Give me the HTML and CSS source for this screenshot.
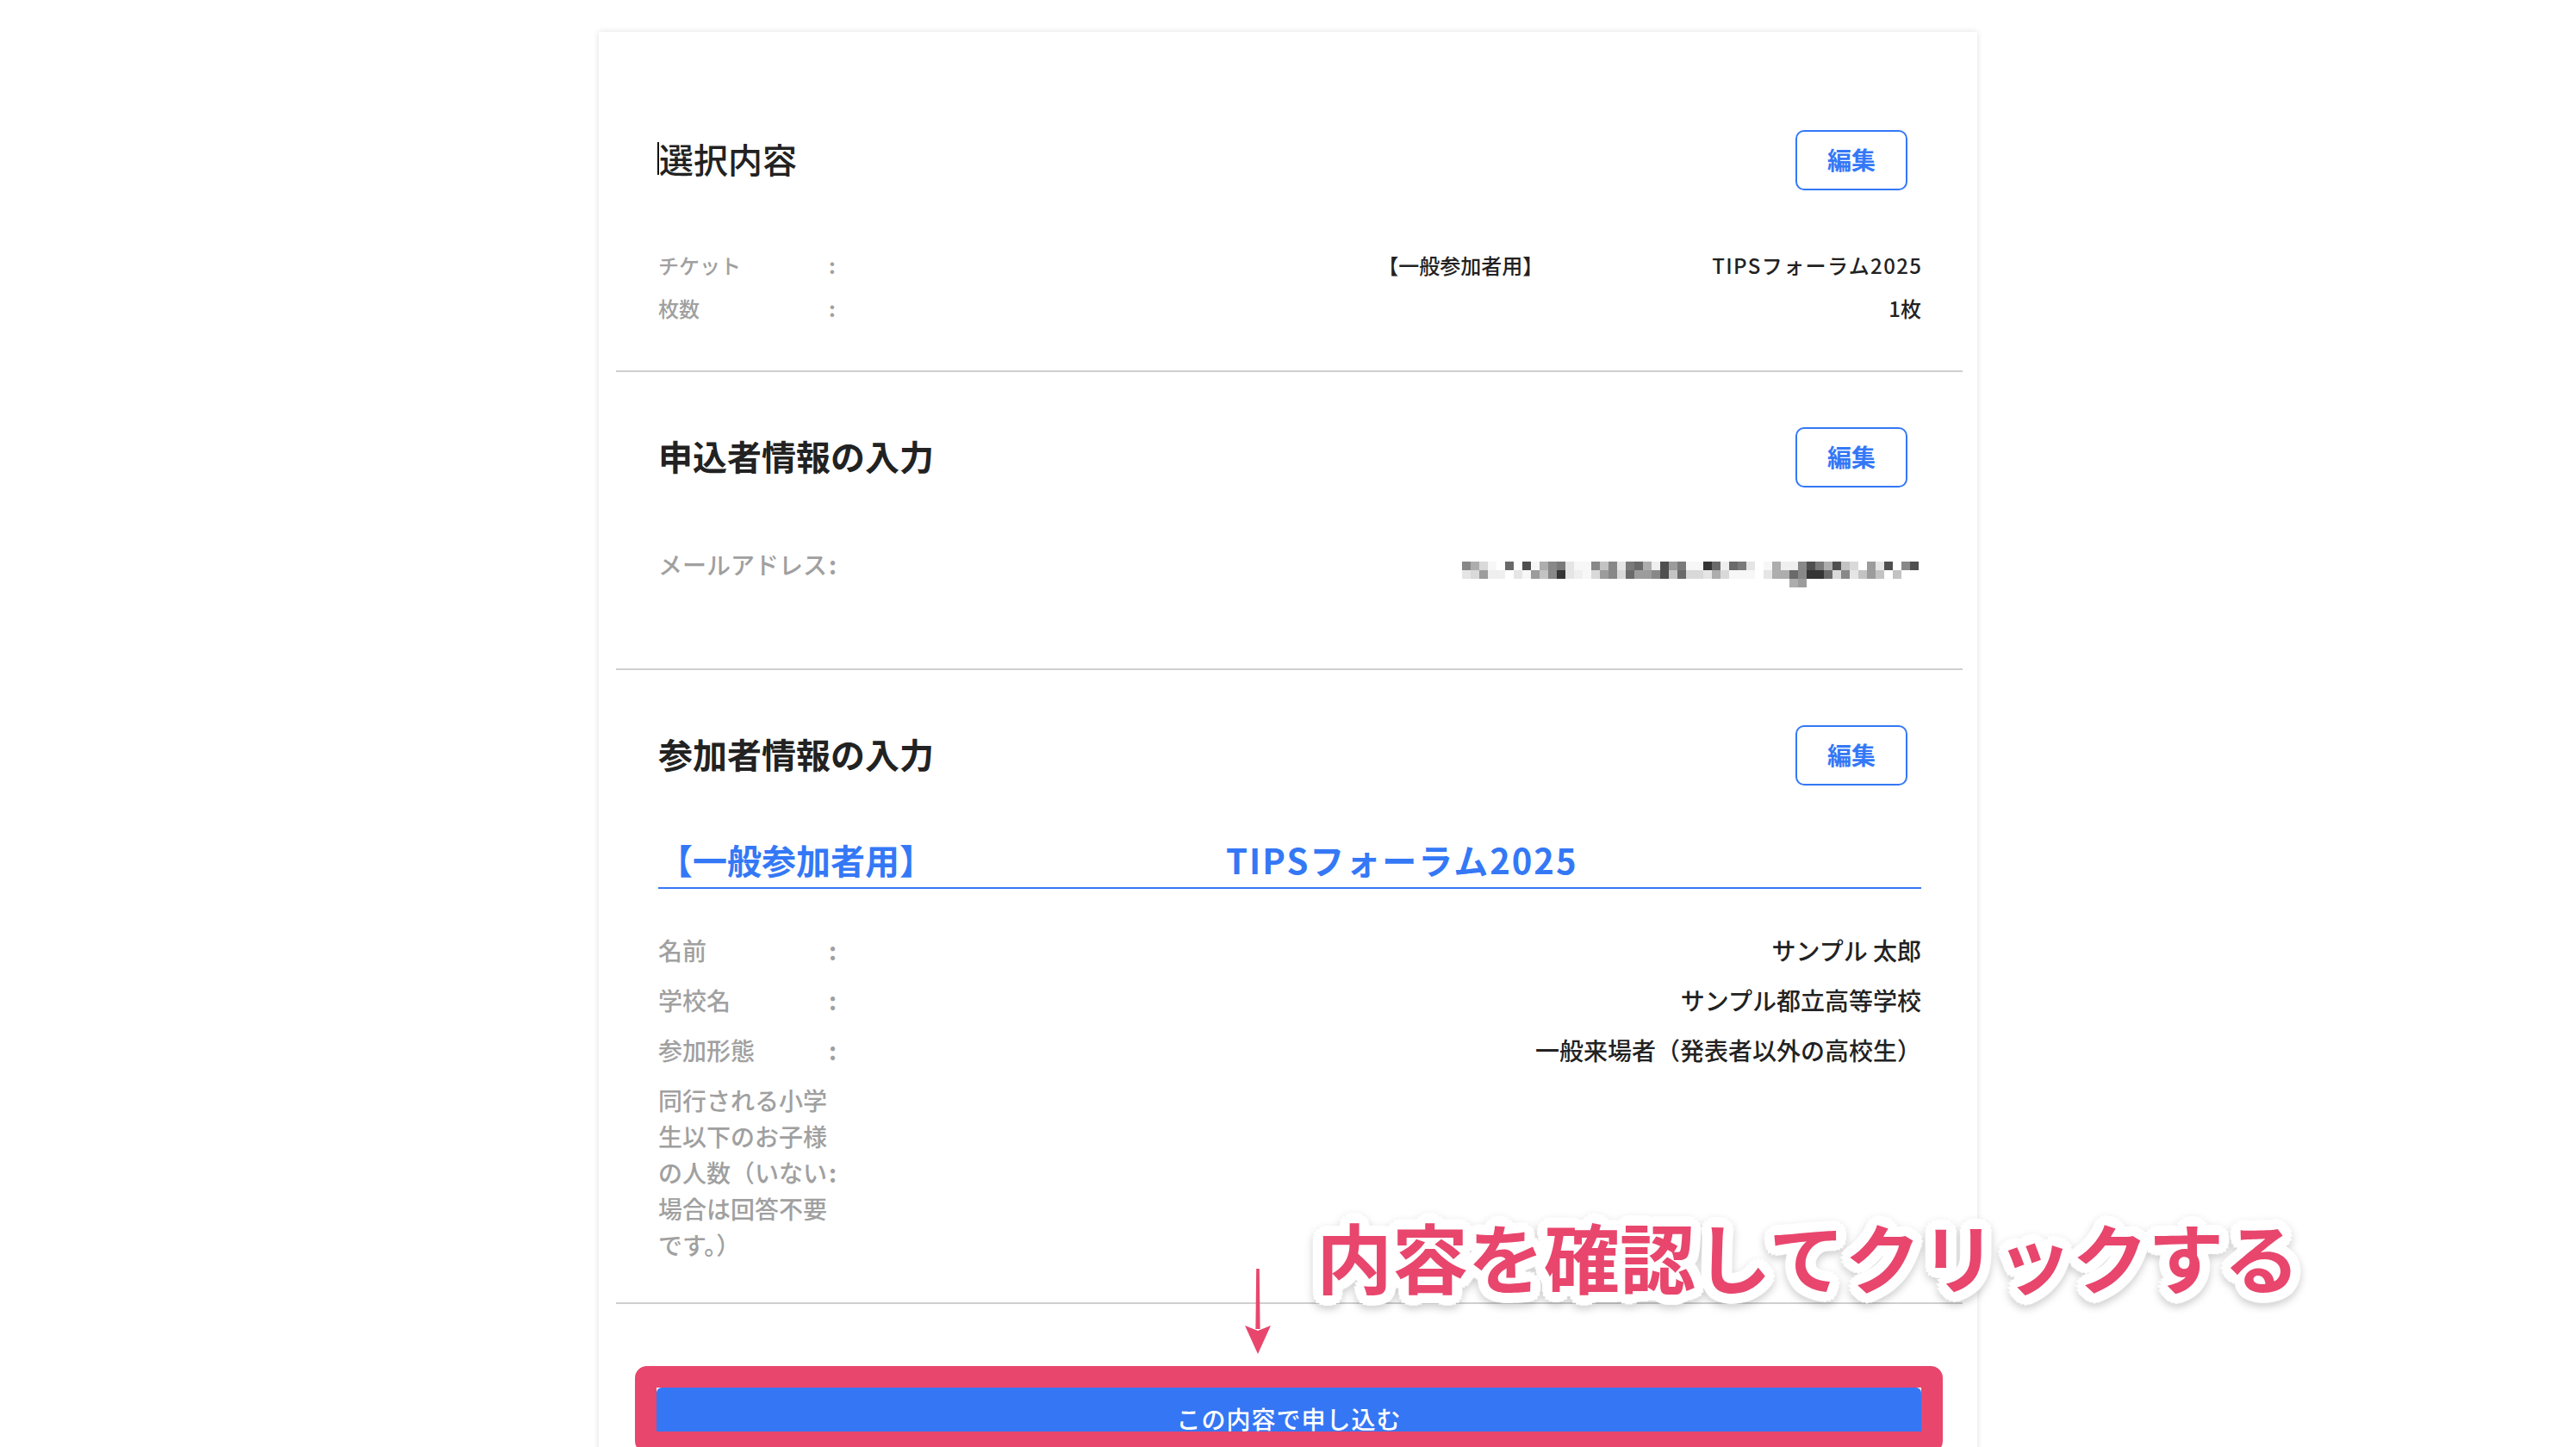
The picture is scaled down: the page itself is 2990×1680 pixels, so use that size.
FILE: index.html
```html
<!DOCTYPE html>
<html lang="ja">
<head>
<meta charset="utf-8">
<title>申込内容の確認</title>
<link rel="stylesheet" href="styles.css">
</head>
<body>
<div class="stage">
  <main class="card">
    <section class="sec sec-select">
      <div class="sec-head">
        <h2 class="sec-title sec-title--light"><span class="caret"></span>選択内容</h2>
        <button class="edit-btn" type="button">編集</button>
      </div>
      <div class="rows rows--small">
        <div class="row">
          <span class="label">チケット</span><span class="colon">:</span>
          <span class="value"><span>【一般参加者用】</span><span class="gap-small">TIPSフォーラム2025</span></span>
        </div>
        <div class="row">
          <span class="label">枚数</span><span class="colon">:</span>
          <span class="value">1枚</span>
        </div>
      </div>
    </section>

    <section class="sec sec-applicant">
      <div class="sec-head">
        <h2 class="sec-title">申込者情報の入力</h2>
        <button class="edit-btn" type="button">編集</button>
      </div>
      <div class="rows rows--email">
        <div class="row">
          <span class="label">メールアドレス</span><span class="colon">:</span>
          <span class="value">
            <span class="mosaic" aria-label="メールアドレス（モザイク）">
              <i class="e"></i><i class="g"></i><i class="i"></i><i class="l"></i><i></i><i class="c"></i><i></i><i class="b"></i><i class="l"></i><i class="g"></i><i class="e"></i><i class="d"></i><i class="j"></i><i class="l"></i><i class="l"></i><i class="e"></i><i class="h"></i><i class="e"></i><i class="j"></i><i class="d"></i><i class="c"></i><i class="g"></i><i class="k"></i><i class="b"></i><i class="f"></i><i class="d"></i><i class="l"></i><i class="l"></i><i class="a"></i><i class="c"></i><i class="k"></i><i class="c"></i><i class="d"></i><i class="j"></i><i></i><i class="l"></i><i class="g"></i><i class="k"></i><i class="k"></i><i class="e"></i><i class="b"></i><i class="d"></i><i class="g"></i><i class="b"></i><i class="h"></i><i class="i"></i><i></i><i class="f"></i><i class="j"></i><i class="b"></i><i></i><i class="e"></i><i class="b"></i>
              <i class="j"></i><i class="i"></i><i class="f"></i><i class="k"></i><i class="k"></i><i></i><i class="j"></i><i class="l"></i><i class="f"></i><i class="h"></i><i class="e"></i><i class="a"></i><i class="j"></i><i class="k"></i><i class="l"></i><i class="i"></i><i class="f"></i><i class="e"></i><i class="i"></i><i class="c"></i><i class="f"></i><i class="f"></i><i class="e"></i><i class="b"></i><i class="h"></i><i class="c"></i><i class="i"></i><i class="i"></i><i class="j"></i><i class="g"></i><i class="i"></i><i class="l"></i><i class="l"></i><i class="l"></i><i></i><i class="j"></i><i class="g"></i><i class="g"></i><i class="c"></i><i class="e"></i><i class="a"></i><i class="a"></i><i class="c"></i><i class="i"></i><i class="e"></i><i class="j"></i><i class="h"></i><i class="f"></i><i class="h"></i><i></i><i class="h"></i><i></i><i></i>
              <i class="g tail"></i><i class="f"></i>
            </span>
          </span>
        </div>
      </div>
    </section>

    <section class="sec sec-participant">
      <div class="sec-head">
        <h2 class="sec-title">参加者情報の入力</h2>
        <button class="edit-btn" type="button">編集</button>
      </div>
      <h3 class="ticket-head"><span>【一般参加者用】</span><span class="gap-large">TIPSフォーラム2025</span></h3>
      <div class="rows rows--participant">
        <div class="row">
          <span class="label">名前</span><span class="colon">:</span>
          <span class="value">サンプル 太郎</span>
        </div>
        <div class="row">
          <span class="label">学校名</span><span class="colon">:</span>
          <span class="value">サンプル都立高等学校</span>
        </div>
        <div class="row">
          <span class="label">参加形態</span><span class="colon">:</span>
          <span class="value">一般来場者（発表者以外の高校生）</span>
        </div>
        <div class="row">
          <span class="label">同行される小学生以下のお子様の人数（いない場合は回答不要です。）</span><span class="colon">:</span>
          <span class="value"></span>
        </div>
      </div>
    </section>

    <div class="submit-wrap">
      <button class="submit-btn" type="button">この内容で申し込む</button>
    </div>
  </main>

  <p class="callout">内容を確認してクリックする</p>
  <svg class="arrow" width="30" height="100" viewBox="0 0 30 100" aria-hidden="true">
    <path d="M13.2 0 L16.8 0 L17.6 70 L12.4 70 Z" fill="#e8466d"/>
    <path d="M0 66 L15 72 L30 66 L15 99 Z" fill="#e8466d"/>
  </svg>
  <div class="frame" aria-hidden="true"></div>
</div>
</body>
</html>
```

FILE: styles.css
```css
* {
  box-sizing: border-box;
}

html,
body {
  margin: 0;
  padding: 0;
  background: #ffffff;
}

body {
  font-family: "Noto Sans CJK JP", "Noto Sans", sans-serif;
  color: #222222;
}

.stage {
  position: relative;
  padding-top: 37px;
  height: 1680px;
  overflow: hidden;
}

.card {
  width: 1600px;
  margin: 0 auto;
  padding: 1px 17px 0 20px;
  background: #ffffff;
  box-shadow: 0 0 7px rgba(0, 0, 0, 0.13);
  min-height: 1720px;
}

.sec {
  padding-left: 49px;
  padding-right: 48px;
  border-bottom: 2px solid #cfcfcf;
}

.sec-select {
  padding-top: 113px;
  padding-bottom: 54px;
}

.sec-applicant {
  padding-top: 64px;
  padding-bottom: 100px;
}

.sec-participant {
  padding-top: 64px;
  padding-bottom: 46px;
}

.sec-head {
  display: flex;
  align-items: center;
  justify-content: space-between;
  height: 70px;
}

.sec-title {
  margin: 0 0 4px;
  display: flex;
  align-items: center;
  font-size: 40px;
  line-height: 1;
  font-weight: 700;
  color: #222222;
}

.sec-title--light {
  font-weight: 500;
}

.caret {
  width: 2px;
  height: 38px;
  margin-left: -1px;
  background: #111111;
}

.edit-btn {
  width: 130px;
  height: 70px;
  margin-right: 16px;
  padding: 0 0 3px;
  border: 2px solid #3478f6;
  border-radius: 10px;
  background: #ffffff;
  color: #3478f6;
  font-family: "Noto Sans CJK JP", "Noto Sans", sans-serif;
  font-size: 28px;
  font-weight: 700;
  line-height: 1;
}

.rows {
  display: flex;
  flex-direction: column;
}

.rows--small {
  margin-top: 69px;
  gap: 14px;
}

.rows--email {
  margin-top: 68px;
}

.rows--participant {
  margin-top: 50px;
  gap: 16px;
}

.row {
  display: flex;
  align-items: center;
  font-size: 28px;
  line-height: 42px;
}

.rows--small .row {
  font-size: 24px;
  line-height: 36px;
}

.label {
  flex: none;
  width: 198px;
  color: #a0a0a0;
  font-weight: 500;
}

.colon {
  flex: none;
  width: 12px;
  color: #a0a0a0;
  font-weight: 700;
}

.value {
  flex: 1;
  display: flex;
  justify-content: flex-end;
  color: #222222;
  font-weight: 500;
}

.gap-small {
  margin-left: 196px;
  letter-spacing: 1.4px;
  margin-right: -1.4px;
}

.ticket-head {
  margin: 56px 0 0;
  padding-bottom: 2px;
  display: flex;
  font-size: 40px;
  line-height: 60px;
  font-weight: 700;
  color: #3478f6;
  border-bottom: 2px solid #3478f6;
}

.gap-large {
  margin-left: 339px;
  letter-spacing: 2px;
}

.mosaic {
  display: grid;
  grid-template-columns: repeat(53, 10px);
  grid-auto-rows: 10px;
  height: 30px;
  margin-top: 12px;
  margin-bottom: -12px;
  margin-right: 3px;
}

.mosaic i { display: block; }
.mosaic .a { background: #353535; }
.mosaic .b { background: #4f4f4f; }
.mosaic .c { background: #6a6a6a; }
.mosaic .d { background: #7a7a7a; }
.mosaic .e { background: #888888; }
.mosaic .f { background: #9c9c9c; }
.mosaic .g { background: #adadad; }
.mosaic .h { background: #c3c3c3; }
.mosaic .i { background: #d9d9d9; }
.mosaic .j { background: #e5e5e5; }
.mosaic .k { background: #efefef; }
.mosaic .l { background: #f7f7f7; }
.mosaic .tail { grid-column: 39; }

.submit-wrap {
  padding: 97px 48px 0 47px;
}

.submit-btn {
  display: block;
  width: 100%;
  height: 76px;
  padding: 0 0 4px;
  border: none;
  border-radius: 6px;
  background: #3576f5;
  color: #ffffff;
  font-family: "Noto Sans CJK JP", "Noto Sans", sans-serif;
  font-size: 28px;
  font-weight: 500;
  line-height: 1;
  letter-spacing: 1px;
}

.callout {
  position: absolute;
  left: 1528px;
  top: 1413px;
  margin: 0;
  font-size: 88px;
  line-height: 88px;
  font-weight: 700;
  color: #e8466d;
  white-space: nowrap;
  text-shadow:
    12px 0 1px #fff, 11px 4.6px 1px #fff, 8.5px 8.5px 1px #fff, 4.6px 11px 1px #fff,
    0 12px 1px #fff, -4.6px 11px 1px #fff, -8.5px 8.5px 1px #fff, -11px 4.6px 1px #fff,
    -12px 0 1px #fff, -11px -4.6px 1px #fff, -8.5px -8.5px 1px #fff, -4.6px -11px 1px #fff,
    0 -12px 1px #fff, 4.6px -11px 1px #fff, 8.5px -8.5px 1px #fff, 11px -4.6px 1px #fff,
    6px 0 0 #fff, -6px 0 0 #fff, 0 6px 0 #fff, 0 -6px 0 #fff;
  filter: drop-shadow(0 4px 5px rgba(0, 0, 0, 0.2));
}

.arrow {
  position: absolute;
  left: 1445px;
  top: 1473px;
}

.frame {
  position: absolute;
  left: 737px;
  top: 1586px;
  width: 1518px;
  height: 101px;
  border: 25px solid #e8466d;
  border-radius: 14px;
}
```
